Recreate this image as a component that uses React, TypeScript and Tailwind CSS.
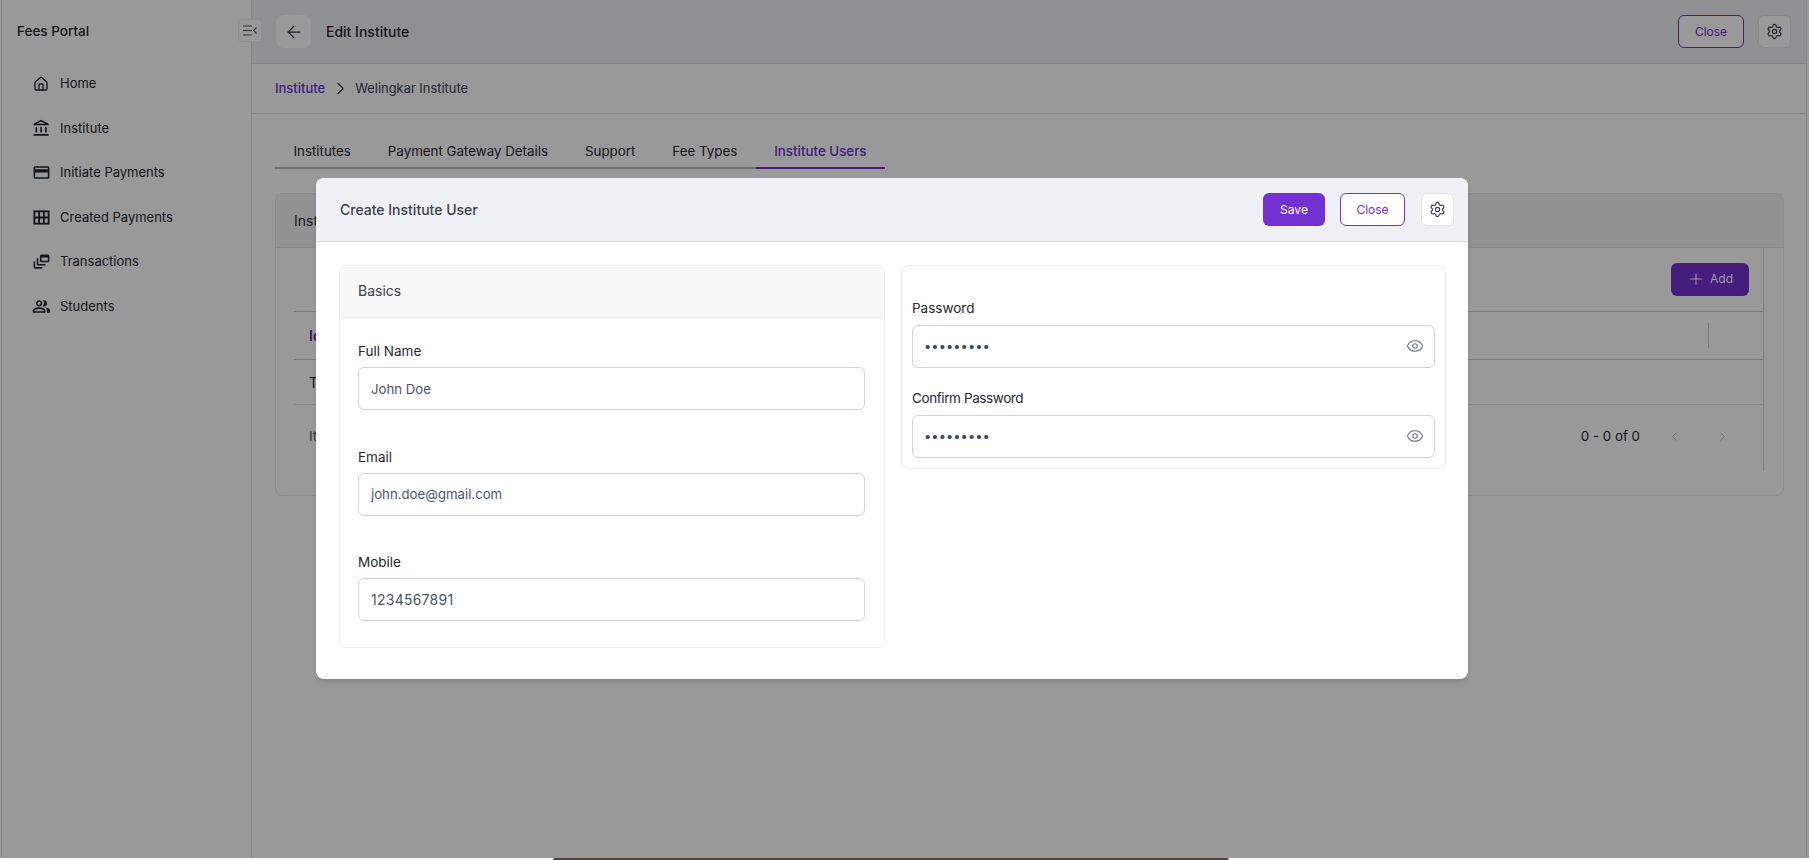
import { ArrowLeft, ChevronLeft, ChevronRight, Eye, House, Plus, Settings } from "lucide-react";
import {
  MdOutlineAccountBalance,
  MdOutlineCreditCard,
  MdOutlineDynamicFeed,
  MdOutlinePeopleAlt,
} from "react-icons/md";

function TableIcon({ size }: { size: number }) {
  return (
    <svg width={size} height={size} viewBox="0 0 20 20" fill="none" stroke="currentColor" strokeWidth="1.9">
      <rect x="2.5" y="3.5" width="15" height="13" />
      <path d="M7.5 3.5v13M12.5 3.5v13M2.5 10h15" />
    </svg>
  );
}

function HomeIcon({ size }: { size: number }) {
  return <House size={size - 3} strokeWidth={2} />;
}

const nav = [
  { label: "Home", icon: HomeIcon },
  { label: "Institute", icon: MdOutlineAccountBalance },
  { label: "Initiate Payments", icon: MdOutlineCreditCard },
  { label: "Created Payments", icon: TableIcon },
  { label: "Transactions", icon: MdOutlineDynamicFeed },
  { label: "Students", icon: MdOutlinePeopleAlt },
];

const tabs = ["Institutes", "Payment Gateway Details", "Support", "Fee Types", "Institute Users"];

function GearButton() {
  return (
    <button className="flex h-[33px] w-[33px] items-center justify-center rounded-md border border-[#e2e4ea] bg-white text-[#374151]">
      <Settings size={17} strokeWidth={1.7} />
    </button>
  );
}

function TextField({ label, value, valueClass }: { label: string; value: string; valueClass: string }) {
  return (
    <div>
      <label className="block h-[21px] text-[13.5px] leading-[21px] text-[#27272f]">{label}</label>
      <input
        readOnly
        value={value}
        className={`mt-[5px] h-[43px] w-full rounded-md border border-[#d0d4dc] bg-white px-3 text-[#4a5468] outline-none ${valueClass}`}
      />
    </div>
  );
}

function PasswordField({ label, tight }: { label: string; tight?: boolean }) {
  return (
    <div>
      <label className={`block h-[21px] text-[13.5px] leading-[21px] text-[#27272f] ${tight ? "tracking-[-0.4px]" : ""}`}>
        {label}
      </label>
      <div className="relative mt-[6px]">
        <input
          readOnly
          type="password"
          value="123456789"
          className="h-[43px] w-full rounded-md border border-[#d0d4dc] bg-white px-[11px] pb-[2px] text-[13px] text-[#3d4a66] outline-none"
        />
        <Eye size={18} strokeWidth={1.4} className="absolute right-[11px] top-[11.5px] text-[#6b7280]" />
      </div>
    </div>
  );
}

export default function App() {
  return (
    <div className="relative h-[860px] w-[1809px] overflow-hidden bg-white font-['Inter',sans-serif] text-[14px] text-[#27272f]">
      <div className="flex h-[858px] pl-px pr-[2px]">
        {/* sidebar */}
        <aside className="relative w-[251px] flex-none border-x border-[#dfe2e6]">
          <div className="flex h-[61.5px] items-center pl-[15px] text-[13.5px] font-medium">Fees Portal</div>
          <button className="absolute left-[236px] top-[19px] flex h-[23px] w-[24px] items-center justify-center rounded-sm border border-[#eceef1] bg-white">
            <svg width="14" height="11" viewBox="0 0 14 11" fill="none" stroke="#4b5563" strokeWidth="1.1">
              <path d="M0 1h9M0 5.5h9M0 10h9" />
              <path d="M13.5 2.5 10.5 5.5l3 3" />
            </svg>
          </button>
          <nav>
            {nav.map((item) => (
              <div key={item.label} className="flex h-[44.5px] items-center pl-[29px] text-[13px]">
                <span className="flex w-[20px] justify-center text-[#1f2430]">
                  <item.icon size={19} />
                </span>
                <span className="ml-[9px]">{item.label}</span>
              </div>
            ))}
          </nav>
        </aside>

        {/* page behind the dialog */}
        <main className="flex min-w-0 flex-1 flex-col border-r border-[#dfe2e6]">
          <header className="flex h-[64px] flex-none items-center border-b border-[#dfe2e6] bg-[#eff0f4] pl-6 pr-[15px]">
            <button className="flex h-[33px] w-[35px] items-center justify-center rounded-lg bg-white text-[#2b2f3a]">
              <ArrowLeft size={20} strokeWidth={1.5} />
            </button>
            <h1 className="ml-[15px] font-medium">Edit Institute</h1>
            <button className="ml-auto h-[33px] w-[66px] rounded-md border border-[#7431d2] bg-white text-[12px] text-[#7431d2]">
              Close
            </button>
            <div className="ml-[14px]">
              <GearButton />
            </div>
          </header>

          <div className="flex h-[50px] flex-none items-center border-b border-[#dfe2e6] pl-[23px] text-[13px]">
            <span className="font-medium text-[#6338d0]">Institute</span>
            <ChevronRight size={21} strokeWidth={1.3} className="ml-[5px] text-[#2b2f3a]" />
            <span className="ml-[4px] pt-[1px] text-[12.9px] text-[#3b4150]">Welingkar Institute</span>
          </div>

          <div className="mt-5 flex pl-[23px] text-[13.33px]">
            {tabs.map((tab) => (
              <div
                key={tab}
                className={`flex h-[35px] items-center border-b-2 px-[18.5px] pt-[2px] ${
                  tab === "Institute Users" ? "border-[#7431d2] font-medium text-[#6338d0]" : "border-[#b5b7bb]"
                }`}
              >
                {tab}
              </div>
            ))}
          </div>

          <section className="ml-[23px] mr-[22px] mt-6 h-[303px] rounded-lg border border-[#e8eaee]">
            <div className="flex h-[54px] items-center border-b border-[#e2e4e8] bg-[#f4f4f6] pb-[1px] pl-[18px]">Institute Users</div>
            <div className="ml-[18px] mr-[19px] h-[223px] border-r border-[#d5d8dd]">
              <div className="flex h-[64px] items-center justify-end border-b border-[#c8cbd0] pr-[14px] pb-[1px]">
                <button className="flex h-[33px] w-[78px] items-center justify-center gap-[5px] rounded-md bg-[#7431d2] text-[12px] text-white">
                  <Plus size={18} strokeWidth={1.4} />
                  Add
                </button>
              </div>
              <div className="flex h-[48px] items-center border-b border-[#c8cbd0] pb-[1px] pl-[15px] font-semibold text-[#5b2aa8]">
                Id
                <span className="ml-auto mr-[54px] h-[25px] border-r border-[#c8cbd0]" />
              </div>
              <div className="flex h-[45px] items-center border-b border-[#e2e4e8] pl-[15px]">Test</div>
              <div className="flex h-[66px] items-center pl-[15px] pr-[33px] pb-[3px] text-[13.3px]">
                <span className="text-[#4a5468]">Items per page</span>
                <span className="ml-auto mr-[27px]">0 - 0 of 0</span>
                <ChevronLeft size={15} strokeWidth={1.4} className="text-[#b5b7bb]" />
                <ChevronRight size={15} strokeWidth={1.4} className="ml-[33px] text-[#b5b7bb]" />
              </div>
            </div>
          </section>
        </main>
      </div>

      {/* bottom edge of the capture */}
      <div className="absolute bottom-0 left-[553px] h-[2px] w-[676px] rounded-t-md bg-[#4a4541]" />

      {/* dialog */}
      <div className="absolute inset-x-0 top-0 h-[858px] bg-black/40 pl-[316px] pt-[178px]">
        <div className="h-[501px] w-[1152px] overflow-hidden rounded-lg bg-white shadow-md">
          <div className="flex h-[64px] items-center border-b border-[#d8dbe2] bg-[#eff0f4] pb-[1px] pl-6 pr-[14px]">
            <h2 className="font-medium text-[#3b3f4a]">Create Institute User</h2>
            <button className="ml-auto h-[33px] w-[62px] rounded-md bg-[#7431d2] pt-[1px] text-[12px] text-white">Save</button>
            <button className="ml-[15px] h-[33px] w-[65px] rounded-md border border-[#7431d2] bg-white pt-[1px] text-[12px] text-[#7431d2]">
              Close
            </button>
            <div className="ml-[16px]">
              <GearButton />
            </div>
          </div>

          <div className="flex items-start gap-4 pl-[23px] pt-[23px]">
            <div className="h-[383px] w-[546px] overflow-hidden rounded-lg border border-[#eceef2]">
              <div className="flex h-[52px] items-center border-b border-[#eceef2] bg-[#f8f8f9] pb-[2px] pl-[18px] text-[#3b3f4a]">Basics</div>
              <div className="flex flex-col gap-[36.5px] pl-[18px] pr-[19px] pt-[23px]">
                <TextField label="Full Name" value="John Doe" valueClass="text-[13.2px]" />
                <TextField label="Email" value="john.doe@gmail.com" valueClass="text-[13.2px]" />
                <TextField label="Mobile" value="1234567891" valueClass="text-[14px] tracking-[0.25px]" />
              </div>
            </div>
            <div className="h-[204px] w-[545px] rounded-lg border border-[#eceef2] px-[10px] pt-[32px]">
              <div className="flex flex-col gap-[20px]">
                <PasswordField label="Password" />
                <PasswordField label="Confirm Password" tight />
              </div>
            </div>
          </div>
        </div>
      </div>
    </div>
  );
}
